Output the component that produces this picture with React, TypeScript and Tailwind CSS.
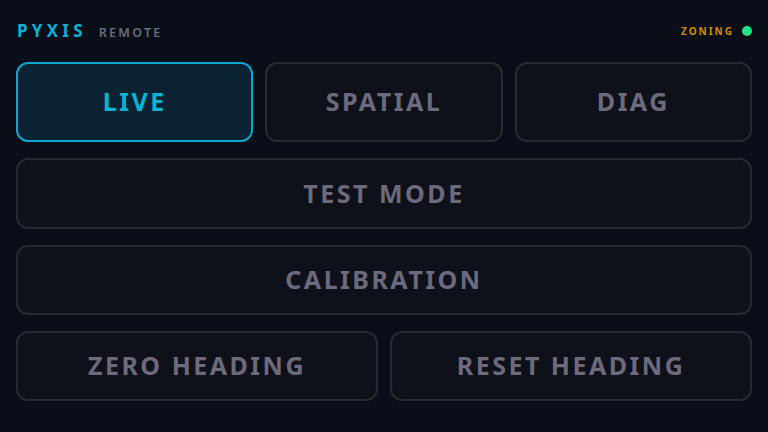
import React from 'react';

interface PadProps {
  label: string;
  active?: boolean;
  className?: string;
}

const Pad: React.FC<PadProps> = ({ label, active, className }) => {
  return (
    <button
      className={
        active
          ? `flex items-center justify-center rounded-xl border-2 border-[#0aa8cc] bg-[#0b2232] text-[25px] font-bold tracking-[0.1em] text-[#0ab2d6] ${className ?? ''}`
          : `flex items-center justify-center rounded-xl border-2 border-[#282a30] bg-[#0e1119] text-[25px] font-bold tracking-[0.1em] text-[#6c6a7c] ${className ?? ''}`
      }
    >
      {label}
    </button>
  );
};

export default function App() {
  return (
    <div
      className="flex h-[432px] w-[768px] flex-col bg-[#0a0e19] px-4"
      style={{ fontFamily: '"Noto Sans", "Open Sans", sans-serif' }}
    >
      {/* Header */}
      <div className="flex h-[62px] items-center justify-between">
        <div className="flex items-baseline gap-3">
          <span className="pl-px text-[17px] font-bold tracking-[0.25em] text-[#0ab2d6]">PYXIS</span>
          <span className="text-[12.5px] font-semibold tracking-[0.18em] text-[#6a6b78]">REMOTE</span>
        </div>
        <div className="flex items-center gap-2">
          <span className="text-[10px] font-bold tracking-[0.2em] text-[#d28a0e]">ZONING</span>
          <span className="h-2.5 w-2.5 rounded-full bg-[#1de584]" />
        </div>
      </div>

      {/* Mode row */}
      <div className="grid h-[80px] grid-cols-3 gap-3">
        <Pad label="LIVE" active />
        <Pad label="SPATIAL" />
        <Pad label="DIAG" />
      </div>

      <Pad label="TEST MODE" className="mt-4 h-[71px] w-full" />
      <Pad label="CALIBRATION" className="mt-4 h-[70px] w-full" />

      <div className="mt-4 grid h-[70px] grid-cols-2 gap-3">
        <Pad label="ZERO HEADING" />
        <Pad label="RESET HEADING" />
      </div>
    </div>
  );
}
